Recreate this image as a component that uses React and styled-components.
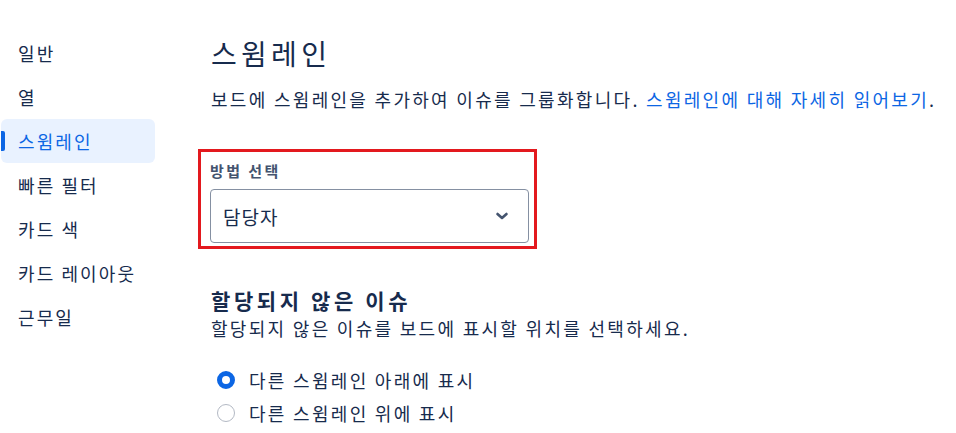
import styled, { createGlobalStyle } from "styled-components";

const GlobalStyle = createGlobalStyle`
  body {
    margin: 0;
    background: #fff;
    font-family: "Noto Sans CJK KR", "Noto Sans", sans-serif;
    color: #172b4d;
  }
`;

const Page = styled.div`
  display: flex;
  width: 956px;
  height: 433px;
  overflow: hidden;
`;

const Sidebar = styled.nav`
  width: 154px;
  padding: 31px 0 0 1px;
  display: flex;
  flex-direction: column;
`;

const NavItem = styled.div`
  position: relative;
  height: 44px;
  display: flex;
  align-items: center;
  padding-left: 17px;
  font-size: 18px;
  letter-spacing: 2.1px;
  border-radius: 6px;
  color: ${(p) => (p.active ? "#0c66e4" : "#172b4d")};
  background: ${(p) => (p.active ? "#e9f2ff" : "transparent")};

  &::before {
    content: "";
    display: ${(p) => (p.active ? "block" : "none")};
    position: absolute;
    left: 0;
    top: 12px;
    width: 4px;
    height: 20px;
    border-radius: 0 2px 2px 0;
    background: #0c66e4;
  }
`;

const Main = styled.main`
  padding: 31px 0 0 56px;
  display: flex;
  flex-direction: column;
`;

const Title = styled.h1`
  margin: 0;
  font-size: 28px;
  font-weight: 400;
  letter-spacing: 4.3px;
  line-height: 44px;
`;

const Desc = styled.p`
  margin: 9px 0 0;
  font-size: 18px;
  letter-spacing: 2.3px;
  line-height: 30px;
  a {
    color: #0c66e4;
    text-decoration: none;
  }
`;

const Highlight = styled.div`
  margin: 35px 0 0 -13px;
  width: 339px;
  box-sizing: border-box;
  border: 3px solid #e3191e;
  padding: 7px 5px 3px 9px;
`;

const Label = styled.label`
  display: block;
  font-size: 15px;
  font-weight: 700;
  letter-spacing: 2.4px;
  color: #44546f;
  line-height: 24px;
`;

const Select = styled.div`
  margin-top: 6px;
  height: 54px;
  box-sizing: border-box;
  border: 1px solid #8590a2;
  border-radius: 4px;
  display: flex;
  align-items: center;
  justify-content: space-between;
  padding: 0 19px 0 12px;
  font-size: 19px;
  letter-spacing: 1px;
`;

const Section = styled.section`
  margin-top: 36px;
`;

const Heading = styled.h2`
  margin: 0;
  font-size: 21px;
  font-weight: 700;
  letter-spacing: 3.6px;
  line-height: 30px;
`;

const Sub = styled.p`
  margin: 0;
  font-size: 18px;
  letter-spacing: 2.3px;
  line-height: 26px;
`;

const Radios = styled.div`
  margin-top: 22px;
  display: flex;
  flex-direction: column;
`;

const RadioRow = styled.label`
  display: flex;
  align-items: center;
  gap: 14px;
  height: 33px;
  padding-left: 6px;
  font-size: 18px;
  letter-spacing: 2.3px;
`;

const Dot = styled.span`
  flex: none;
  width: 18px;
  height: 18px;
  box-sizing: border-box;
  border-radius: 50%;
  border: ${(p) => (p.checked ? "5px solid #0c66e4" : "1.5px solid #b3b9c4")};
  background: #fff;
`;

const Chevron = () => (
  <svg width="14" height="14" viewBox="0 0 14 14">
    <path d="M2.5 5 L7 9 L11.5 5" fill="none" stroke="#44546f" strokeWidth="2.6" strokeLinecap="round" strokeLinejoin="round" />
  </svg>
);

const navItems = ["일반", "열", "스윔레인", "빠른 필터", "카드 색", "카드 레이아웃", "근무일"];

export default function App() {
  return (
    <Page>
      <GlobalStyle />
      <Sidebar>
        {navItems.map((item) => (
          <NavItem key={item} active={item === "스윔레인"}>
            {item}
          </NavItem>
        ))}
      </Sidebar>
      <Main>
        <Title>스윔레인</Title>
        <Desc>
          보드에 스윔레인을 추가하여 이슈를 그룹화합니다. <a href="#">스윔레인에 대해 자세히 읽어보기</a>.
        </Desc>
        <Highlight>
          <Label>방법 선택</Label>
          <Select>
            <span>담당자</span>
            <Chevron />
          </Select>
        </Highlight>
        <Section>
          <Heading>할당되지 않은 이슈</Heading>
          <Sub>할당되지 않은 이슈를 보드에 표시할 위치를 선택하세요.</Sub>
          <Radios>
            <RadioRow>
              <Dot checked />
              다른 스윔레인 아래에 표시
            </RadioRow>
            <RadioRow>
              <Dot />
              다른 스윔레인 위에 표시
            </RadioRow>
          </Radios>
        </Section>
      </Main>
    </Page>
  );
}
